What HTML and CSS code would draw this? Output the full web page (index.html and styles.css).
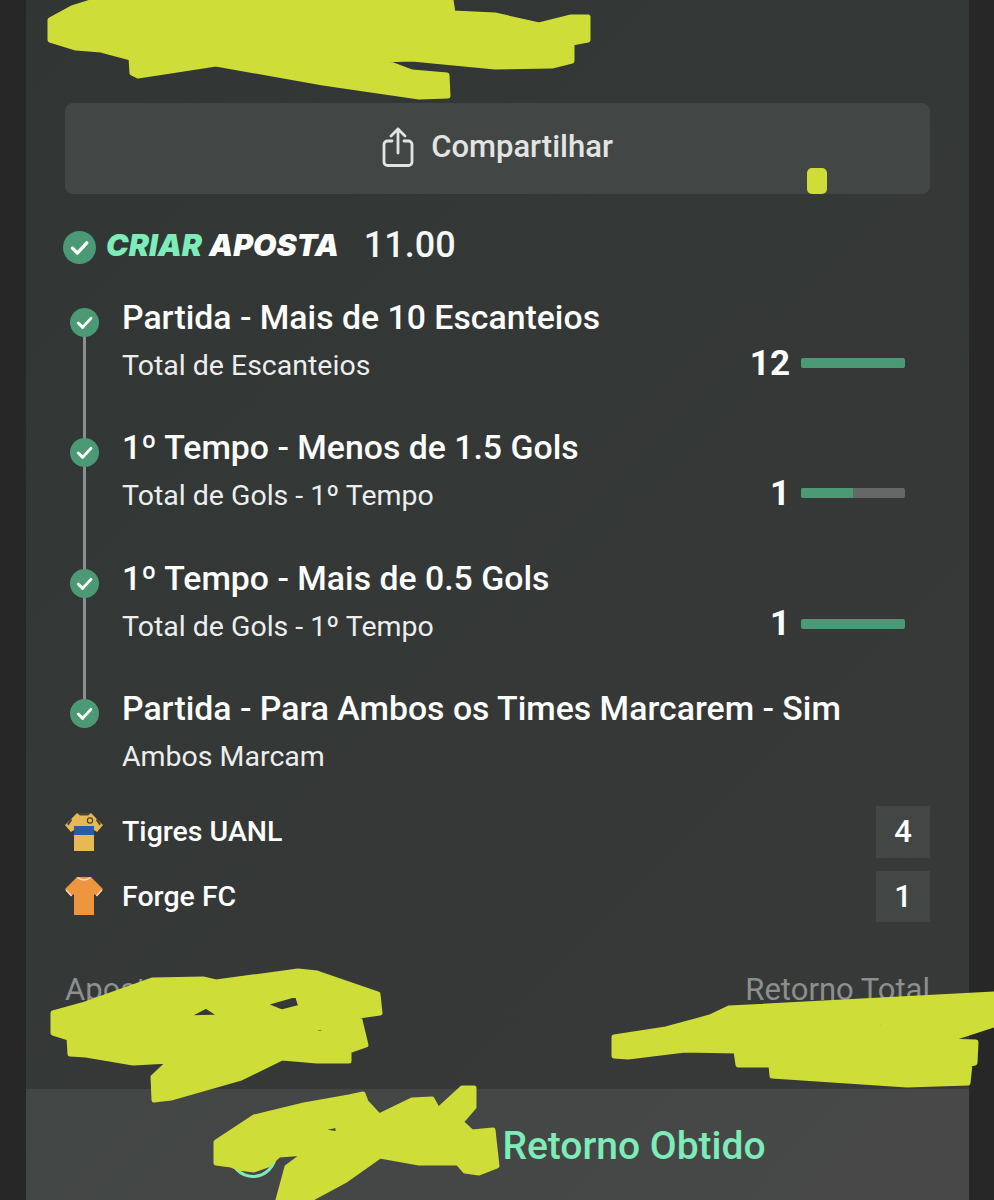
FILE: index.html
```html
<!DOCTYPE html>
<html lang="pt-BR">
<head>
  <meta charset="UTF-8">
  <meta name="viewport" content="width=device-width, initial-scale=1">
  <title>Criar Aposta</title>
  <link rel="stylesheet" href="styles.css">
</head>
<body>
  <div class="panel">
    <div class="content">
      <button class="share-btn">
        <svg class="share-icon" viewBox="0 0 32 40" fill="none" stroke="#e2e4e3" stroke-width="2.8" stroke-linecap="round" stroke-linejoin="round">
          <path d="M16 26V2M9 9l7-7 7 7"/>
          <path d="M10 14H5.5A3.5 3.5 0 0 0 2 17.500V35a3.500 3.500 0 0 0 3.500 3.500h21A3.500 3.500 0 0 0 30 35V17.500A3.500 3.500 0 0 0 26.500 14H22"/>
        </svg>
        Compartilhar
      </button>

      <div class="bet-head">
        <svg class="check big" viewBox="0 0 28 28"><circle cx="14" cy="14" r="14"/><path d="M8 14.500l4.200 4.200L20.200 10"/></svg>
        <span class="brand"><span class="mint">CRIAR</span> APOSTA</span>
        <span class="odds">11.00</span>
      </div>

      <div class="legs">
        <div class="leg">
          <svg class="check" viewBox="0 0 28 28"><circle cx="14" cy="14" r="14"/><path d="M8 14.500l4.200 4.200L20.200 10"/></svg>
          <div class="leg-text">
            <div class="leg-title">Partida - Mais de 10 Escanteios</div>
            <div class="leg-sub">Total de Escanteios</div>
          </div>
          <div class="result">
            <span class="result-num">12</span>
            <div class="bar"><div class="bar-fill" style="width: 100%"></div></div>
          </div>
        </div>

        <div class="leg">
          <svg class="check" viewBox="0 0 28 28"><circle cx="14" cy="14" r="14"/><path d="M8 14.500l4.200 4.200L20.200 10"/></svg>
          <div class="leg-text">
            <div class="leg-title">1º Tempo - Menos de 1.5 Gols</div>
            <div class="leg-sub">Total de Gols - 1º Tempo</div>
          </div>
          <div class="result">
            <span class="result-num">1</span>
            <div class="bar"><div class="bar-fill" style="width: 50%"></div></div>
          </div>
        </div>

        <div class="leg">
          <svg class="check" viewBox="0 0 28 28"><circle cx="14" cy="14" r="14"/><path d="M8 14.500l4.200 4.200L20.200 10"/></svg>
          <div class="leg-text">
            <div class="leg-title">1º Tempo - Mais de 0.5 Gols</div>
            <div class="leg-sub">Total de Gols - 1º Tempo</div>
          </div>
          <div class="result">
            <span class="result-num">1</span>
            <div class="bar"><div class="bar-fill" style="width: 100%"></div></div>
          </div>
        </div>

        <div class="leg">
          <svg class="check" viewBox="0 0 28 28"><circle cx="14" cy="14" r="14"/><path d="M8 14.500l4.200 4.200L20.200 10"/></svg>
          <div class="leg-text">
            <div class="leg-title">Partida - Para Ambos os Times Marcarem - Sim</div>
            <div class="leg-sub">Ambos Marcam</div>
          </div>
        </div>
      </div>

      <div class="teams">
        <div class="team">
          <svg class="shirt" viewBox="0 0 38 40">
            <path d="M12 1h14l12 12-6 7-3-2v21H9V18l-3 2-6-7z" fill="#e6b955"/>
            <path d="M9 14h20v9H9z" fill="#2a5ba8"/>
            <path d="M12 1h14l-3 2.500h-8zM32 6l4 6-1.500 1.500-3.500-5zM6 6l-4 6 1.500 1.500 3.500-5z" fill="#4b4632"/>
            <circle cx="25" cy="8.500" r="2.600" fill="none" stroke="#4b4632" stroke-width="1.200"/>
          </svg>
          <span class="team-name">Tigres UANL</span>
          <span class="score">4</span>
        </div>
        <div class="team">
          <svg class="shirt" viewBox="0 0 38 40">
            <path d="M12 1h14l12 12-6 7-3-2v21H9V18l-3 2-6-7z" fill="#ee953f"/>
            <path d="M12.500 1.500q6.500 5 13 0" fill="none" stroke="#f3e3c8" stroke-width="1.300"/>
            <path d="M37 14l-5.500 6M1 14l5.500 6" fill="none" stroke="#f3e3c8" stroke-width="1.300"/>
          </svg>
          <span class="team-name">Forge FC</span>
          <span class="score">1</span>
        </div>
      </div>

      <div class="totals">
        <span>Aposta</span>
        <span>Retorno Total</span>
      </div>
    </div>

    <div class="footer">
      <svg class="footer-ring" viewBox="0 0 48 48"><circle cx="24" cy="24" r="22.500"/></svg>
      <span class="footer-text">Retorno Obtido</span>
    </div>
  </div>

  <!-- tinta amarela por cima da imagem -->
  <svg class="scribble" viewBox="0 0 994 1200" fill-rule="evenodd">
    <path d="M50 20L72 8 97 0H451L453 13 495 15 539 25 571 17H588V40L572 43V61L552 66 495 67 412 59 380 60 412 72 447 75 448 96 419 97 323 83 216 64 138 76 132 73 131 58 101 50 76 48 50 40Z"/>
    <rect class="dot" x="807" y="168" width="20" height="26" rx="5"/>
    <path d="M53 1013L82 1005 152 980 203 979 216 982 298 971 317 973 378 994 380 1013 359 1016 366 1045 349 1051V1061H317L282 1058 241 1078 171 1098 154 1100 153 1077 170 1061 133 1063 86 1055 70 1054 69 1038 53 1033ZM183 1018L206 1006 223 1017ZM262 1004L297 994 301 1007 282 1012ZM307 1033L321 1026 327 1033Z"/>
    <path d="M614 1037L666 1029 710 1017 729 1008 994 994V1025L944 1041 976 1042 975 1063 970 1064 968 1083 907 1085 772 1076 771 1065H738L736 1051 685 1050 628 1057 614 1056ZM868 1024L908 1017 881 1027Z"/>
    <path d="M216 1142L254 1117 304 1105 349 1097 363 1094 366 1102 379 1116 412 1100 432 1099 438 1110 462 1088H474V1107L461 1122 472 1132 493 1130 497 1166 479 1173 465 1171 458 1163H419L380 1156 346 1180 309 1200H278L287 1167 306 1153 279 1155 268 1165 254 1170 238 1168 231 1165 216 1163ZM313 1130L338 1125V1134Z"/>
  </svg>
</body>
</html>
```

FILE: styles.css
```css
* {
  box-sizing: border-box;
}

html, body {
  margin: 0;
  padding: 0;
  height: 1200px;
  overflow: hidden;
}

body {
  position: relative;
  background: #262726;
  font-family: Roboto, 'Liberation Sans', sans-serif;
  color: #fff;
}

.panel {
  display: flex;
  flex-direction: column;
  height: 1200px;
  margin: 0 25px 0 26px;
  background: linear-gradient(135deg, #313635, #383a39);
}

.content {
  flex: 1;
  padding: 103px 39px 0;
}

.share-btn {
  display: flex;
  align-items: center;
  justify-content: center;
  gap: 17px;
  width: 100%;
  height: 91px;
  padding: 0 0 4px;
  background: #424645;
  border: none;
  border-radius: 8px;
  color: #e2e4e3;
  font-family: inherit;
  font-size: 31px;
  font-weight: 500;
}

.share-icon {
  width: 32px;
  height: 40px;
}

.bet-head {
  display: flex;
  align-items: center;
  height: 36px;
  margin-top: 33px;
}

.check {
  position: relative;
  z-index: 1;
  flex: none;
  width: 29px;
  height: 29px;
  margin: 10px 23px 0 5px;
}

.check circle {
  fill: #4b9a75;
}

.check path {
  fill: none;
  stroke: #fff;
  stroke-width: 2.8;
  stroke-linecap: round;
  stroke-linejoin: round;
}

.check.big {
  width: 33px;
  height: 33px;
  margin: 4px 10px 0 -2px;
}

.brand {
  font-family: Inter, sans-serif;
  font-size: 30.300px;
  font-weight: 900;
  font-style: italic;
  word-spacing: 1px;
  white-space: nowrap;
}

.mint {
  color: #7decb9;
}

.odds {
  margin-left: 25px;
  font-size: 36px;
  font-weight: 500;
  color: #f5f6f6;
}

.legs {
  margin-top: 35px;
}

.leg {
  position: relative;
  display: flex;
  height: 130.3px;
}

.leg:not(:last-child)::after {
  content: "";
  position: absolute;
  left: 18px;
  top: 35px;
  bottom: -14px;
  width: 3px;
  background: #8b8e8d;
}

.leg-text {
  flex: 1;
}

.leg-title {
  font-size: 33.800px;
  font-weight: 500;
  line-height: 40px;
  white-space: nowrap;
}

.leg-sub {
  margin-top: 8px;
  font-size: 28.500px;
  line-height: 40px;
  color: #eceeed;
}

.result {
  display: flex;
  align-items: center;
  justify-content: flex-end;
  gap: 11px;
  height: 40px;
  margin-top: 45px;
  padding-right: 25px;
}

.result-num {
  font-size: 35px;
  font-weight: 700;
}

.bar {
  width: 104px;
  height: 10px;
  background: #666867;
  border-radius: 2px;
  overflow: hidden;
}

.bar-fill {
  height: 100%;
  background: #4b9a75;
}

.teams {
  display: flex;
  flex-direction: column;
  gap: 13px;
  margin-top: -13px;
}

.team {
  display: flex;
  align-items: center;
  height: 51.500px;
}

.shirt {
  width: 38px;
  height: 40px;
  margin-right: 19px;
}

.team-name {
  flex: 1;
  font-size: 28.500px;
  font-weight: 500;
}

.score {
  width: 54px;
  height: 100%;
  background: #424645;
  font-size: 31px;
  font-weight: 500;
  line-height: 51px;
  text-align: center;
}

.totals {
  display: flex;
  justify-content: space-between;
  margin-top: 48px;
  font-size: 31px;
  line-height: 40px;
  color: #8c8f8e;
}

.footer {
  display: flex;
  align-items: center;
  justify-content: center;
  gap: 225px;
  height: 111px;
  background: linear-gradient(135deg, #424645, #484848);
}

.footer-ring {
  width: 48px;
  height: 48px;
  margin-top: 18px;
}

.footer-ring circle {
  fill: none;
  stroke: #7decb9;
  stroke-width: 3;
}

.footer-text {
  margin-top: 2px;
  font-size: 39px;
  font-weight: 500;
  color: #7decb9;
}

.scribble {
  position: absolute;
  top: 0;
  left: 0;
  width: 994px;
  height: 1200px;
  fill: #cfdd38;
  stroke: #cfdd38;
  stroke-width: 5;
  stroke-linejoin: round;
}

.scribble .dot {
  stroke: none;
}
```
